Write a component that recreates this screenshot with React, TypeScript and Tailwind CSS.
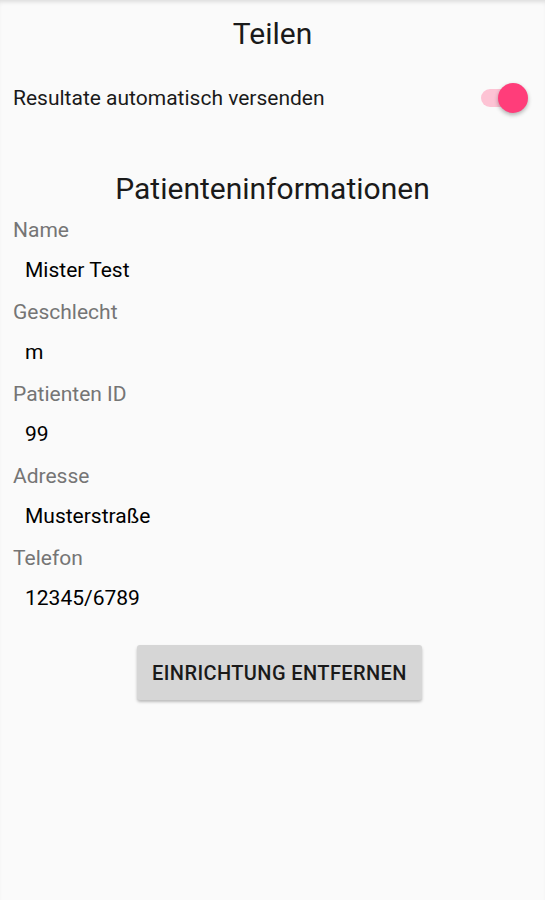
import React, { useState } from 'react'

const fields = [
    { label: 'Name', value: 'Mister Test' },
    { label: 'Geschlecht', value: 'm' },
    { label: 'Patienten ID', value: '99' },
    { label: 'Adresse', value: 'Musterstraße' },
    { label: 'Telefon', value: '12345/6789' },
]

function Toggle({ on, onChange }: { on: boolean; onChange: (v: boolean) => void }) {
    return (
        <button
            onClick={() => onChange(!on)}
            className="relative h-[30px] w-[50px] shrink-0"
        >
            <span className={`absolute left-[3px] top-[6px] h-[18px] w-[40px] rounded-full ${on ? 'bg-[#fdc3d4]' : 'bg-[#b9b9b9]'}`} />
            <span
                className={`absolute top-0 h-[30px] w-[30px] rounded-full shadow-[0_2px_4px_rgba(0,0,0,0.3)] ${on ? 'left-[20px] bg-[#ff3d7a]' : 'left-0 bg-[#f1f1f1]'}`}
            />
        </button>
    )
}

export default function App() {
    const [autoSend, setAutoSend] = useState(true)

    return (
        <div className="min-h-[900px] bg-[#fafafa] text-[#1a1a1a] shadow-[inset_0_4px_4px_-2px_rgba(0,0,0,0.12)]" style={{ fontFamily: 'Roboto, "Noto Sans", sans-serif' }}>
            <h1 className="pt-[15px] text-center text-[30px] leading-[38px]">Teilen</h1>

            <div className="mt-[30px] flex items-center justify-between pl-[13px] pr-[17px]">
                <span className="text-[21px] leading-[30px]">Resultate automatisch versenden</span>
                <Toggle on={autoSend} onChange={setAutoSend} />
            </div>

            {/* Patient info */}
            <h2 className="mt-[57px] text-center text-[30px] leading-[38px]">Patienteninformationen</h2>

            <div className="mt-[7px] px-[13px]">
                {fields.map(f => (
                    <div key={f.label} className="flex flex-col">
                        <span className="text-[21px] leading-[30px] text-[#757575]">{f.label}</span>
                        <span className="mt-[10px] mb-[12px] pl-[12px] text-[21px] leading-[30px] text-black">{f.value}</span>
                    </div>
                ))}
            </div>

            <div className="mt-[20px] flex justify-center">
                <button className="ml-[14px] h-[55px] w-[285px] rounded-[3px] bg-[#d6d6d6] text-[20px] font-medium tracking-[0.4px] text-[#1a1a1a] shadow-[0_2px_3px_rgba(0,0,0,0.25)]">
                    EINRICHTUNG ENTFERNEN
                </button>
            </div>
        </div>
    )
}
